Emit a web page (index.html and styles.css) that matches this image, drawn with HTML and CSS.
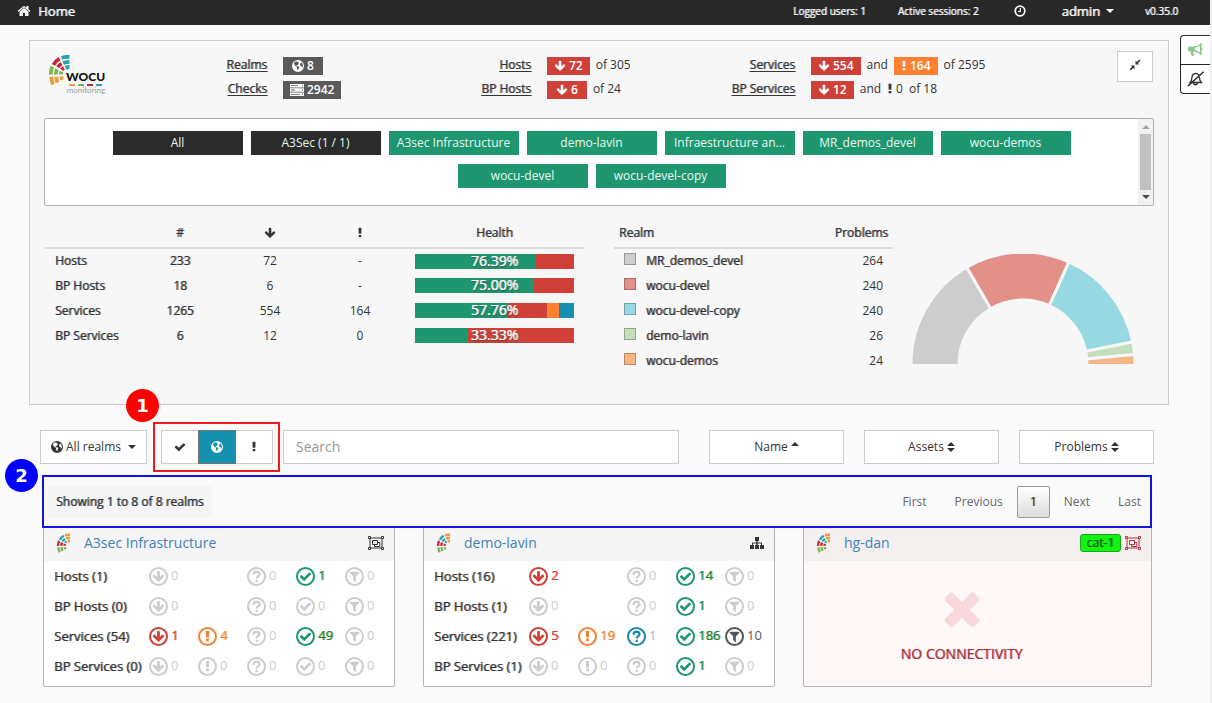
FILE: index.html
```html
<!DOCTYPE html>
<html lang="en">
<head>
<meta charset="utf-8">
<title>WOCU Monitoring</title>
<link rel="stylesheet" href="styles.css">
</head>
<body>
<svg class="sprite" aria-hidden="true">
  <symbol id="down" viewBox="0 0 1792 1792"><path d="M1675 832q0 53-37 90l-651 652q-39 37-91 37-53 0-90-37l-651-652q-38-36-38-90 0-53 38-91l74-75q39-37 91-37 53 0 90 37l294 294v-704q0-52 38-90t90-38h128q52 0 90 38t38 90v704l294-294q37-37 90-37 52 0 91 37l75 75q37 39 37 91z"/></symbol>
  <symbol id="check" viewBox="0 0 1792 1792"><path d="M1671 566q0 40-28 68l-724 724-136 136q-28 28-68 28t-68-28l-136-136-362-362q-28-28-28-68t28-68l136-136q28-28 68-28t68 28l294 295 656-657q28-28 68-28t68 28l136 136q28 28 28 68z"/></symbol>
  <symbol id="bang" viewBox="0 0 1792 1792"><path d="M1088 1248v224q0 26-19 45t-45 19h-256q-26 0-45-19t-19-45v-224q0-26 19-45t45-19h256q26 0 45 19t19 45zm30-1056l-28 768q-1 26-20 45t-46 19h-256q-26 0-46-19t-20-45l-28-768q-1-26 18-45t44-19h320q26 0 44 19t18 45z"/></symbol>
  <symbol id="times" viewBox="0 0 1792 1792"><path d="M1490 1322q0 40-28 68l-136 136q-28 28-68 28t-68-28l-294-294-294 294q-28 28-68 28t-68-28l-136-136q-28-28-28-68t28-68l294-294-294-294q-28-28-28-68t28-68l136-136q28-28 68-28t68 28l294 294 294-294q28-28 68-28t68 28l136 136q28 28 28 68t-28 68l-294 294 294 294q28 28 28 68z"/></symbol>
  <symbol id="filter" viewBox="0 0 1792 1792"><path d="M1595 295q17 41-14 70l-493 493v742q0 42-39 59-13 5-25 5-27 0-45-19l-256-256q-19-19-19-45v-486l-493-493q-31-29-14-70 17-39 59-39h1280q42 0 59 39z"/></symbol>
  <symbol id="home" viewBox="0 0 1792 1792"><path d="M1472 992v480q0 26-19 45t-45 19h-384v-384h-256v384h-384q-26 0-45-19t-19-45v-480q0-1 .5-3t.5-3l575-474 575 474q1 2 1 6zm223-69l-62 74q-8 9-21 11h-3q-13 0-21-7l-692-577-692 577q-12 8-24 7-13-2-21-11l-62-74q-8-10-7-23.500t11-21.500l719-599q32-26 76-26t76 26l244 204v-195q0-14 9-23t23-9h192q14 0 23 9t9 23v408l219 182q10 8 11 21.500t-7 23.500z"/></symbol>
  <symbol id="question" viewBox="0 0 12 12"><path d="M3.300 4.300C3.300 2 4.500 1.500 6 1.500s2.800 1 2.800 2.500C8.800 5.800 6.200 5.600 6.200 7.800M6.200 9v2" fill="none" stroke="currentColor" stroke-width="2"/></symbol>
  <symbol id="globe" viewBox="0 0 12 12"><path fill-rule="evenodd" d="M6 0a6 6 0 1 1 0 12A6 6 0 0 1 6 0zM2.200 2.600C1.800 4 2.400 5.200 3.500 5.900L5.200 6.700 4.800 7.900 6 10.400 6.600 8.700 7.500 7.600 6.500 6.500 5 6 4.300 5.200 5.600 4.900 6.900 3.600 6.300 2.200 5.200 1.400 3.600 1.600zM8.300 3.400 7.900 4.900 8.600 6 9.800 6.200 10 8 10.900 6.500 10.600 3.800 9.400 2.600z"/></symbol>
  <symbol id="server" viewBox="0 0 14 12"><path fill-rule="evenodd" d="M0 0h14v3.400H0zM0 4.300h14v3.400H0zM0 8.600h14V12H0zM1 1.300h7v.8H1zM1 5.600h4v.8H1zM1 9.900h9v.8H1zM12 1.200h1v1h-1zM12 5.500h1v1h-1zM12 9.800h1v1h-1z"/></symbol>
  <symbol id="clock" viewBox="0 0 12 12"><circle cx="6" cy="6" r="4.800" fill="none" stroke="currentColor" stroke-width="1.700"/><path d="M6.300 3v3.500H4" fill="none" stroke="currentColor" stroke-width="1.100"/></symbol>
  <symbol id="caret" viewBox="0 0 8 4"><path d="M0 0h8L4 4z"/></symbol>
  <symbol id="caretup" viewBox="0 0 8 4"><path d="M0 4h8L4 0z"/></symbol>
  <symbol id="sort" viewBox="0 0 8 10"><path d="M0 4h8L4 0zM0 6h8L4 10z"/></symbol>
  <symbol id="compress" viewBox="0 0 12 12"><path d="M6.500 5.500V1.800l1.300 1.300L10.300.6l1.100 1.100-2.500 2.500 1.300 1.300zM5.500 6.500v3.700L4.200 8.900 1.700 11.400.6 10.300l2.500-2.500-1.300-1.300z"/></symbol>
  <symbol id="horn" viewBox="0 0 16 14"><path d="M12.600 1.200v9.600C10.700 9 8.500 8.100 6.300 8V4C8.500 3.900 10.700 3 12.600 1.200z" fill="none" stroke="currentColor" stroke-width="1.300"/><path d="M1.500 3.400h5v5.200h-1c-.5 1.400.2 2.400 1 3.600-.9 1-2.400.9-3 .4-.4-1.500-.9-2.500-.4-4H1.500C.6 8.600.2 8 .2 7.300V4.700c0-.8.6-1.300 1.300-1.300zM13 4.500c1.900 0 1.900 3 0 3zM12.300.4h1.200v11.400h-1.200z"/></symbol>
  <symbol id="belloff" viewBox="0 0 16 15"><path d="M3 10.800C4.500 9.500 4.500 7.500 4.700 5.600 5 3.500 6.200 2.400 8 2.200s3.400 1.100 3.600 3.400c.2 2.400.4 3.900 1.900 5.200zM6.300 11c0 2.600 3.400 2.600 3.400 0M.8 14.200 15.600.8" fill="none" stroke="currentColor" stroke-width="1.300"/></symbol>
  <symbol id="group" viewBox="0 0 16 14"><path d="M2 2h12v10H2zM4.500 4.500h5v4h-5zM9.500 6.500h2.300v4H6.500v-2M.5.500h2v2h-2zM13.500.5h2v2h-2zM.5 11.500h2v2h-2zM13.500 11.500h2v2h-2z" fill="none" stroke="currentColor"/></symbol>
  <symbol id="sitemap" viewBox="0 0 14 12"><path d="M5 0h4v4H7.700v1.500H12V8h2v4h-4V8h1V6.500H7.700V8H9v4H5V8h1.300V6.500H3V8h1v4H0V8h2V5.500h4.300V4H5z"/></symbol>
  <symbol id="fan" viewBox="0 0 22 30">
    <g fill="none" stroke-width="3.800">
      <g class="fan-a"><path d="M12.500 3Q16 1.600 20.500 2"/><path d="M14.200 8Q17 6.900 20.500 7.200"/><path d="M16.500 12.700Q18.500 11.900 20.500 12"/></g>
      <g class="fan-b"><path d="M4.500 9.800Q6.500 6 10.600 3.600"/><path d="M8.800 12.300Q10.200 10 12.600 8.600"/><path d="M12.700 14.800Q13.600 13.600 15 12.900"/></g>
      <g class="fan-c"><path d="M2 19.500Q1.600 15 3.400 11.600"/><path d="M7 19.500Q6.800 16.500 7.900 14.100"/><path d="M12 19.500Q11.900 17.700 12.300 16.500"/></g>
      <g class="fan-d"><path d="M2.200 21.700Q2.600 26 4 29.500"/><path d="M7.200 21.700Q7.500 25 8.600 27.600"/><path d="M12.200 21.500Q12.400 23 13.100 24.700"/></g>
    </g>
  </symbol>
</svg>

<header class="topbar">
  <a class="home" href="#"><svg class="i14"><use href="#home"/></svg>Home</a>
  <nav class="topnav">
    <span class="users">Logged users: 1</span>
    <span class="sessions">Active sessions: 2</span>
    <a class="clock" href="#" aria-label="Time"><svg class="i12"><use href="#clock"/></svg></a>
    <a class="admin" href="#">admin <svg class="caret"><use href="#caret"/></svg></a>
    <span class="version">v0.35.0</span>
  </nav>
</header>

<aside class="side">
  <button class="side-btn news" aria-label="News"><svg class="i16"><use href="#horn"/></svg></button>
  <button class="side-btn" aria-label="Mute alerts"><svg class="bell"><use href="#belloff"/></svg></button>
</aside>

<main class="page">
  <section class="panel">
    <div class="summary">
      <div class="logo">
        <svg class="logo-fan"><use href="#fan"/></svg>
        <div class="logo-words"><b>WOCU</b><i class="dashes"><s></s><s></s><s></s><s></s></i><small>monitoring</small></div>
      </div>
      <dl class="stats">
        <dt><a href="#">Realms</a></dt><dd><span class="badge gray wide"><svg class="i12"><use href="#globe"/></svg>8</span></dd>
        <dt><a href="#">Checks</a></dt><dd><span class="badge gray"><svg class="i14"><use href="#server"/></svg>2942</span></dd>
      </dl>
      <dl class="stats">
        <dt><a href="#">Hosts</a></dt><dd><span class="badge red"><svg class="i12"><use href="#down"/></svg>72</span> of 305</dd>
        <dt><a href="#">BP Hosts</a></dt><dd><span class="badge red wide"><svg class="i12"><use href="#down"/></svg>6</span> of 24</dd>
      </dl>
      <dl class="stats">
        <dt><a href="#">Services</a></dt><dd><span class="badge red"><svg class="i12"><use href="#down"/></svg>554</span> and <span class="badge orange"><svg class="narrow"><use href="#bang"/></svg>164</span> of 2595</dd>
        <dt><a href="#">BP Services</a></dt><dd><span class="badge red"><svg class="i12"><use href="#down"/></svg>12</span> and <span class="plain"><svg class="narrow"><use href="#bang"/></svg>0</span> of 18</dd>
      </dl>
      <button class="collapse" aria-label="Collapse"><svg class="i12"><use href="#compress"/></svg></button>
    </div>

    <div class="realmbox">
      <div class="realms">
        <button class="realm dark">All</button><button class="realm dark">A3Sec (1 / 1)</button><button class="realm">A3sec Infrastructure</button><button class="realm">demo-lavin</button><button class="realm">Infraestructure an...</button><button class="realm">MR_demos_devel</button><button class="realm">wocu-demos</button><button class="realm">wocu-devel</button><button class="realm">wocu-devel-copy</button>
      </div>
      <div class="scroll"><svg class="caret dim"><use href="#caretup"/></svg><div class="thumb"></div><svg class="caret"><use href="#caret"/></svg></div>
    </div>

    <div class="overview">
      <table class="health">
        <thead><tr><th></th><th>#</th><th><svg class="i12"><use href="#down"/></svg></th><th><svg class="i12"><use href="#bang"/></svg></th><th class="hcol">Health</th></tr></thead>
        <tbody>
          <tr><th>Hosts</th><td class="b">233</td><td>72</td><td>-</td><td class="hcell"><div class="bar"><div class="ok" style="width:76.39%"></div><span>76.39%</span></div></td></tr>
          <tr><th>BP Hosts</th><td class="b">18</td><td>6</td><td>-</td><td class="hcell"><div class="bar"><div class="ok" style="width:75%"></div><span>75.00%</span></div></td></tr>
          <tr><th>Services</th><td class="b">1265</td><td>554</td><td>164</td><td class="hcell"><div class="bar"><div class="ok" style="width:57.76%"></div><div class="crit" style="width:25.24%"></div><div class="warn" style="width:7.6%"></div><div class="unk" style="width:9.4%"></div><span>57.76%</span></div></td></tr>
          <tr><th>BP Services</th><td class="b">6</td><td>12</td><td>0</td><td class="hcell"><div class="bar"><div class="ok" style="width:33.33%"></div><span>33.33%</span></div></td></tr>
        </tbody>
      </table>
      <table class="problems">
        <thead><tr><th>Realm</th><th class="num">Problems</th></tr></thead>
        <tbody>
          <tr><th><i class="sw c1"></i>MR_demos_devel</th><td>264</td></tr>
          <tr><th><i class="sw c2"></i>wocu-devel</th><td>240</td></tr>
          <tr><th><i class="sw c3"></i>wocu-devel-copy</th><td>240</td></tr>
          <tr><th><i class="sw c4"></i>demo-lavin</th><td>26</td></tr>
          <tr><th><i class="sw c5"></i>wocu-demos</th><td>24</td></tr>
        </tbody>
      </table>
      <svg class="donut" viewBox="0 0 222 110" role="img" aria-label="Problems by realm">
        <g stroke="#f7f7f7" stroke-width="3">
          <path fill="#cdcdcd" d="M-1 110A112 112 0 0 1 54.700 13.200L78.800 54.700A64 64 0 0 0 47 110V114H-1z"/>
          <path fill="#e39089" d="M54.700 13.200A112 112 0 0 1 157 7.900L137.300 51.700A64 64 0 0 0 78.800 54.700z"/>
          <path fill="#98d8e3" d="M157 7.900A112 112 0 0 1 220.800 88L173.700 97.400A64 64 0 0 0 137.300 51.700z"/>
          <path fill="#c3debb" d="M220.800 88A112 112 0 0 1 222.500 100.400L174.700 104.900A64 64 0 0 0 173.700 97.400z"/>
          <path fill="#f3b684" d="M222.500 100.400A112 112 0 0 1 223 114H175L174.700 104.900z"/>
        </g>
      </svg>
    </div>
  </section>

  <div class="toolbar">
    <button class="btn all"><svg class="i12"><use href="#globe"/></svg>All realms<svg class="caret"><use href="#caret"/></svg></button>
    <div class="states">
      <button class="btn" aria-label="Ok"><svg class="i12"><use href="#check"/></svg></button><button class="btn on" aria-label="All"><svg class="i12"><use href="#globe"/></svg></button><button class="btn" aria-label="Problems"><svg class="i12"><use href="#bang"/></svg></button>
      <b class="mark one">1</b>
    </div>
    <input class="search" type="text" placeholder="Search" aria-label="Search">
    <div class="sorts">
      <button class="btn">Name<svg class="caret up"><use href="#caretup"/></svg></button>
      <button class="btn">Assets<svg class="sort"><use href="#sort"/></svg></button>
      <button class="btn">Problems<svg class="sort"><use href="#sort"/></svg></button>
    </div>
  </div>

  <div class="pager">
    <b class="mark two">2</b>
    <span class="showing">Showing 1 to 8 of 8 realms</span>
    <nav class="pages"><a href="#">First</a><a href="#">Previous</a><button class="current">1</button><a href="#">Next</a><a href="#">Last</a></nav>
  </div>

  <div class="cards">
    <article class="card">
      <header><svg class="fan"><use href="#fan"/></svg><a href="#">A3sec Infrastructure</a><svg class="i16 end"><use href="#group"/></svg></header>
      <table class="assets">
        <tr><th>Hosts (1)</th><td><svg><use href="#down"/></svg>0</td><td></td><td><svg><use href="#question"/></svg>0</td><td class="g"><svg><use href="#check"/></svg>1</td><td><svg><use href="#filter"/></svg>0</td></tr>
        <tr><th>BP Hosts (0)</th><td><svg><use href="#down"/></svg>0</td><td></td><td><svg><use href="#question"/></svg>0</td><td><svg><use href="#check"/></svg>0</td><td><svg><use href="#filter"/></svg>0</td></tr>
        <tr><th>Services (54)</th><td class="r"><svg><use href="#down"/></svg>1</td><td class="o"><svg><use href="#bang"/></svg>4</td><td><svg><use href="#question"/></svg>0</td><td class="g"><svg><use href="#check"/></svg>49</td><td><svg><use href="#filter"/></svg>0</td></tr>
        <tr><th>BP Services (0)</th><td><svg><use href="#down"/></svg>0</td><td><svg><use href="#bang"/></svg>0</td><td><svg><use href="#question"/></svg>0</td><td><svg><use href="#check"/></svg>0</td><td><svg><use href="#filter"/></svg>0</td></tr>
      </table>
    </article>
    <article class="card">
      <header><svg class="fan"><use href="#fan"/></svg><a href="#">demo-lavin</a><svg class="i14 end"><use href="#sitemap"/></svg></header>
      <table class="assets">
        <tr><th>Hosts (16)</th><td class="r"><svg><use href="#down"/></svg>2</td><td></td><td><svg><use href="#question"/></svg>0</td><td class="g"><svg><use href="#check"/></svg>14</td><td><svg><use href="#filter"/></svg>0</td></tr>
        <tr><th>BP Hosts (1)</th><td><svg><use href="#down"/></svg>0</td><td></td><td><svg><use href="#question"/></svg>0</td><td class="g"><svg><use href="#check"/></svg>1</td><td><svg><use href="#filter"/></svg>0</td></tr>
        <tr><th>Services (221)</th><td class="r"><svg><use href="#down"/></svg>5</td><td class="o"><svg><use href="#bang"/></svg>19</td><td class="u"><svg><use href="#question"/></svg>1</td><td class="g"><svg><use href="#check"/></svg>186</td><td class="k"><svg><use href="#filter"/></svg>10</td></tr>
        <tr><th>BP Services (1)</th><td><svg><use href="#down"/></svg>0</td><td><svg><use href="#bang"/></svg>0</td><td><svg><use href="#question"/></svg>0</td><td class="g"><svg><use href="#check"/></svg>1</td><td><svg><use href="#filter"/></svg>0</td></tr>
      </table>
    </article>
    <article class="card off">
      <header><svg class="fan"><use href="#fan"/></svg><a href="#">hg-dan</a><span class="cat">cat-1</span><svg class="i16"><use href="#group"/></svg></header>
      <div class="nocon"><svg><use href="#times"/></svg><strong>NO CONNECTIVITY</strong></div>
    </article>
  </div>
</main>
</body>
</html>
```
FILE: styles.css
```css
* { box-sizing: border-box; }
body { margin: 0; background: #fafafa; border-right: 2px solid #f0f0f0; min-height: 100vh; font: 12px/18px "Open Sans", "Noto Sans", sans-serif; color: #333; overflow-x: hidden; position: relative; }
button, input { font: inherit; color: inherit; }
button { cursor: pointer; padding: 0; }
a { color: inherit; text-decoration: none; }
svg { fill: currentColor; flex: none; }
.sprite { position: absolute; width: 0; height: 0; }
.i12 { width: 12px; height: 12px; }
.i14 { width: 14px; height: 14px; }
.i16 { width: 16px; height: 14px; }
.narrow { width: 12px; height: 12px; margin: 0 -3px; }
.caret { width: 8px; height: 4px; }
.sort { width: 8px; height: 10px; }

/* Medium emphasis: regular letterforms with a thicker stem */
.topbar, .stats dt, .overview th, .health .b, .showing, .current, .assets th, .assets .r, .assets .o, .assets .g, .cat, .nocon strong { font-weight: 400; text-shadow: 1px 0 color-mix(in srgb, currentColor 65%, transparent); }

.topbar { height: 25px; background: #282828; color: #fff; display: flex; align-items: center; justify-content: space-between; padding: 0 32px 4px 17px; }
.home { display: flex; align-items: center; gap: 7px; font-size: 13px; }
.topnav { display: flex; align-items: center; font-size: 10px; }
.sessions { margin-left: 32px; }
.clock { margin-left: 36px; display: flex; }
.admin { margin: 0 31px 0 35px; font-size: 13px; display: flex; align-items: center; gap: 6px; }

.side { position: absolute; right: 0; top: 35px; width: 30px; border: 1px solid #282828; border-right: 0; border-radius: 4px 0 0 4px; background: #fff; }
.side-btn { display: flex; align-items: center; justify-content: center; width: 100%; height: 28px; border: 0; background: none; }
.news { color: #8fc78b; height: 29px; border-bottom: 1px solid #282828; }
.bell { width: 17px; height: 16px; }

.page { padding: 15px 41px 16px 29px; }
.panel { border: 1px solid #ccc; background: #f7f7f7; padding: 10px 14px 31px; }
.summary { display: flex; height: 67px; padding-right: 1px; }
.logo { display: flex; width: 174px; padding: 4px 0 0 5px; }
.logo-fan { width: 22px; height: 30px; }
.logo-fan { --fa: #2aa0b0; --fb: #c22a3c; --fc: #7db54a; --fd: #ee9b3a; }
.fan-a { stroke: var(--fa); }
.fan-b { stroke: var(--fb); }
.fan-c { stroke: var(--fc); }
.fan-d { stroke: var(--fd); }
.logo-words { margin: 16px 0 0 -5px; display: flex; flex-direction: column; }
.logo-words b { font: 900 12px/12px Lato, sans-serif; color: #111; }
.logo-words small { font: 400 8px/9px Lato, sans-serif; color: #999; text-align: right; }
.dashes { display: flex; justify-content: space-between; padding: 0 3px; margin-top: 1px; }
.dashes s { width: 6px; height: 2px; background: #ee9b3a; }
.dashes s:nth-child(2) { background: #7db54a; }
.dashes s:nth-child(3) { background: #c22a3c; }
.dashes s:nth-child(4) { background: #2aa0b0; }
.stats { flex: 0 1 264px; margin: 0; padding-top: 6px; display: grid; grid-template-columns: 49px auto; grid-auto-rows: 18px; row-gap: 6px; column-gap: 16px; align-content: start; }
.stats + .stats { grid-template-columns: 65px auto; margin-left: -16px; flex-basis: 280px; }
.stats dt { text-decoration: underline; text-underline-offset: 2px; white-space: nowrap; justify-self: end; line-height: 16px; }
.stats dd { margin: 0; display: flex; gap: 6px; white-space: nowrap; line-height: 16px; }
.badge { display: inline-flex; align-items: center; gap: 3px; height: 18px; padding: 0 7px; color: #fff; font-weight: 600; }
.wide { padding: 0 9px; }
.gray { background: #5a5a5a; }
.red { background: #cf4038; }
.orange { background: #ff8030; }
.plain { display: inline-flex; gap: 3px; align-items: center; height: 16px; }
.collapse { margin-left: auto; width: 36px; height: 31px; border: 1px solid #ccc; background: #fff; }

.realmbox { display: flex; height: 88px; border: 1px solid #b0b0b0; border-radius: 2px; background: #fff; overflow: hidden; }
.realms { flex: 1; display: flex; flex-wrap: wrap; justify-content: center; align-content: flex-start; gap: 9px 8px; padding: 12px 60px; }
.realm { width: 130px; height: 24px; border: 0; background: #1e9670; color: #e8f6f0; white-space: nowrap; }
.dark { background: #2b2b2b; }
.scroll { width: 15px; background: #f1f1f1; display: flex; flex-direction: column; align-items: center; gap: 5px; padding: 6px 0; color: #505050; }
.dim { color: #a3a3a3; }
.thumb { width: 11px; flex: 1; background: #c1c1c1; }

.overview { display: flex; align-items: flex-start; padding: 10px 0 0 1px; }
table { border-collapse: collapse; table-layout: fixed; }
.overview th, .overview td { padding: 0; height: 25px; }
.overview thead th { height: 32px; padding-top: 2px; border-bottom: 2px solid #ddd; vertical-align: middle; }
.overview thead svg { vertical-align: middle; }
.overview tbody th { text-align: left; padding-left: 10px; }
.health { width: 539px; text-align: center; }
.hcol { width: 179px; }
.overview .hcell { padding: 0 10px; }
.bar { position: relative; display: flex; height: 15px; background: #cf4038; }
.bar span { position: absolute; inset: 0; color: #fff; font-size: 14px; line-height: 14px; text-shadow: 1px 0 #fffa, 1px 1px 2px #444; }
.ok { background: #1e9670; }
.crit { background: #cf4038; }
.warn { background: #ff8030; }
.unk { background: #1591b0; }
.problems { width: 279px; margin-left: 30px; }
.overview .problems thead th { text-align: left; padding: 2px 5px 0; }
.overview .problems thead .num { text-align: right; }
.problems td { text-align: right; }
.overview .problems td { padding-right: 10px; }
.sw { display: inline-block; width: 12px; height: 12px; margin-right: 10px; border: 1px solid rgba(0,0,0,.25); }
.c1 { background: #cdcdcd; }
.c2 { background: #e39089; }
.c3 { background: #98d8e3; }
.c4 { background: #c3debb; }
.c5 { background: #f3b684; }
.donut { width: 222px; height: 110px; margin: 38px 0 0 19px; }

.toolbar { display: flex; margin: 25px 15px 0 11px; }
.btn { height: 34px; border: 1px solid #ccc; background: #fff; display: flex; align-items: center; justify-content: center; gap: 4px; }
.all { width: 107px; gap: 3px; }
.all .caret { margin-left: 4px; }
.states { position: relative; display: flex; margin: 0 10px 0 14px; }
.states::after { content: ""; position: absolute; inset: -8px -7px -8px -8px; border: 2px solid #f01818; pointer-events: none; }
.states .btn { width: 37px; border-right: 0; }
.states .btn:last-of-type { border-right: 1px solid #ccc; border-left: 0; }
.states .on { width: 38px; background: #1591b0; color: #fff; border: 1px solid #77736a; }
.mark { position: absolute; width: 33px; height: 33px; border-radius: 50%; color: #fff; font: bold 18px/33px "DejaVu Sans", sans-serif; text-align: center; }
.one { background: #f00; left: -35px; top: -41px; }
.two { background: #00f; left: -39px; top: -18px; }
.search { flex: 1; min-width: 0; height: 34px; border: 1px solid #ccc; background: #fff; padding: 0 12px 1px; font-size: 14px; }
.search::placeholder { color: #999; }
.sorts { display: flex; gap: 20px; margin-left: 30px; }
.sorts .btn { width: 135px; gap: 3px; }
.up { margin-bottom: 6px; }

.pager { position: relative; z-index: 1; display: flex; align-items: center; justify-content: space-between; height: 53px; margin: 11px 17px 0 13px; border: 2px solid #1414e0; padding: 0 9px 0 3px; }
.showing { background: #f5f5f5; padding: 7px 8px 7px 9px; }
.pages { display: flex; align-items: center; color: #666; }
.pages a { padding: 0 14px; }
.pages a:last-child { padding-right: 0; }
.current { width: 33px; height: 32px; border: 1px solid #999; border-radius: 2px; background: linear-gradient(#fff, #dcdcdc); color: #333; }

.cards { display: grid; grid-template-columns: repeat(3, 1fr); gap: 28px; margin: -2px 17px 0 14px; }
.card { border: 1px solid #b5b5b5; border-radius: 2px; background: #fff; height: 161px; }
.card header { height: 34px; background: #f5f5f5; display: flex; align-items: center; padding: 0 10px 2px 13px; font-size: 14px; }
.card header a { color: #4280b8; margin-left: 13px; margin-right: auto; }
.fan { width: 14px; height: 20px; --fa: #ee9b3a; --fb: #2aa0b0; --fc: #c22a3c; --fd: #7db54a; }
.assets { width: 340px; margin-left: 10px; font-size: 13px; }
.assets th { width: 95px; text-align: left; padding: 0; height: 30px; white-space: nowrap; }
.assets td { padding: 0; color: #ccc; white-space: nowrap; }
.assets svg { width: 19px; height: 19px; border: 2px solid; border-radius: 50%; padding: 1px; margin-right: 3px; vertical-align: middle; }
.assets .r { color: #cf4038; }
.assets .o { color: #f58033; }
.assets .g { color: #157f2a; }
.assets .g svg { color: #1e9670; }
.assets .u { color: #82bcd8; }
.assets .u svg { color: #1b87a8; }
.assets .k { color: #555; }
.off { background: #fff8f8; }
.off header { background: #f5f0f0; color: #b03040; }
.cat { background: #11f411; border: 1px solid #1aa51a; border-radius: 3px; color: #145a14; font-size: 12px; line-height: 16px; padding: 0 6px; margin-right: 4px; }
.nocon { display: flex; flex-direction: column; align-items: center; padding-top: 21px; color: #a92f38; padding-right: 32px; }
.nocon svg { width: 52px; height: 52px; color: #f8d8db; }
.nocon strong { font-size: 14px; margin-top: 11px; }
```
